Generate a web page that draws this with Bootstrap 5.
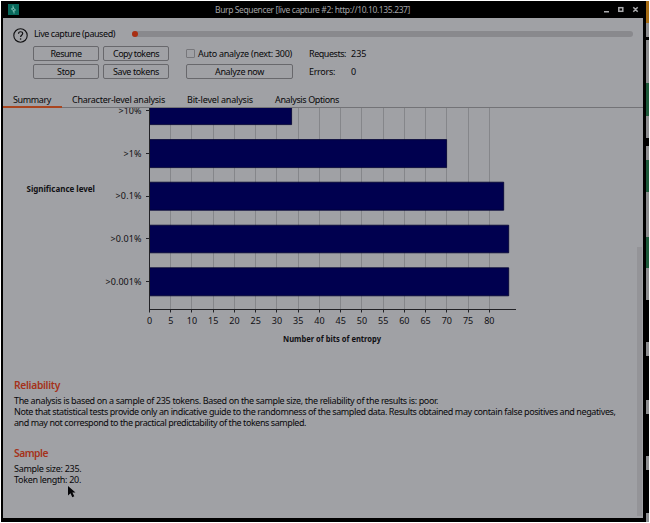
<!DOCTYPE html>
<html lang="en">
<head>
<meta charset="utf-8">
<title>Burp Sequencer</title>
<link href="https://cdn.jsdelivr.net/npm/bootstrap@5.3.0/dist/css/bootstrap.min.css" rel="stylesheet">
<style>
body{width:650px;height:523px;overflow:hidden;background:#fff;font:9px/11px "Noto Sans","Open Sans",sans-serif;color:#08080a}
.win{width:645px;height:521px;margin:1px 0 0 1px;background:#000;padding:0 3px 4px 2px}
.titlebar{height:17px;color:#a3a3a6;font-size:8.5px}
.titlebar .logo{margin-left:5px}
.titlebar .caption{white-space:nowrap;padding-left:196px}
.winctl{margin-right:2px}
.body-area{background:#a0a1a5;min-height:0}
.tools{height:73px;padding:9px 9px 0 10px}
.help{width:15px;height:15px;margin:1px 0 0 0}
.top-rows{margin-left:-1px}
.live{height:14px;line-height:14px;padding-left:7px}
#live{width:97px}
.track{height:6px;border-radius:3px;background:#89898d;width:501px;margin-left:1px}
.knob{width:6px;height:6px;border-radius:50%;background:#a92f13}
.btn.tool{--bs-btn-padding-x:0;--bs-btn-padding-y:0;--bs-btn-font-size:9px;--bs-btn-line-height:12px;--bs-btn-color:#08080a;--bs-btn-border-color:#68686c;--bs-btn-border-radius:2px;height:15px}
.w66{width:66px}.w107{width:107px}
.r1,.r2{padding-left:6px;height:15px}
.r1{margin-top:5px}.r2{margin-top:3px}
.r1 .btn+.btn,.r2 .btn+.btn{margin-left:4px}
.r2 .btn+.w107{margin-left:17px}
.check{width:9px;height:9px;border:1px solid #77777b;border-radius:1px;margin:0 3px 0 17px}
#auto{width:111px}.r2 .lab{margin-left:16px}
.lab{width:42px}
.tabs{height:17px;border-bottom:1px solid #737377;padding-left:10px}
.tabs .nav-link{padding:3px 0 0;color:#08080a;line-height:12px;height:17px;white-space:nowrap;font-size:9px}
.tabs .nav-link.active{border-bottom:2px solid #a9451f;margin-left:-10px;padding-left:10px;width:59px}
.tabs .t2{margin-left:10px;width:115px}.tabs .t3{width:88px}
.scroller{height:410px;overflow:hidden}
.chart{height:262px;width:634px}
.chart text{font-size:9px;fill:#101014}
.heading{font-size:10.3px;line-height:14px;font-weight:600;color:#a5321a}
.report{padding-left:11px;white-space:nowrap}
.rel{margin-top:8px}.sam{margin-top:18px}
.p1,.p2{margin-top:3px}
.thumb{width:5px;height:269px;margin-top:139px;background:#949498}
.desk{width:3px;height:521px;margin-top:1px;background:#000}
.g{background:#8d8e90}.gr{background:#1e5b3c}.or{background:#a76d14}
.pointer{left:67px;top:485px}
</style>
</head>
<body class="d-flex position-relative">
<main class="win d-flex flex-column flex-shrink-0">
  <header class="titlebar d-flex align-items-center">
    <svg class="logo" width="11" height="11" viewBox="0 0 11 11"><rect width="11" height="11" fill="#08695c"/><path d="M5 1.5v3.4H3.3L6 7.2H4.8M6 9.5V6h1.6L5 3.8h1" fill="none" stroke="#79bfb2" stroke-width="1"/></svg>
    <div class="caption flex-grow-1"><span id="cap">Burp Sequencer [live capture #2: http://10.10.135.237]</span></div>
    <svg class="winctl" width="38" height="11" viewBox="0 0 38 11" fill="none" stroke="#aaaaad" stroke-width="1.5"><path d="M1 7.8h5M30.3 3.2l4.4 4.6M34.7 3.2l-4.400 4.6"/><rect x="15.8" y="3.7" width="4" height="3.6"/></svg>
  </header>
  <div class="body-area flex-grow-1 d-flex flex-column">
    <section class="tools d-flex">
      <svg class="help flex-shrink-0" viewBox="0 0 15 15"><circle cx="7.5" cy="7.5" r="6.7" fill="none" stroke="#101012" stroke-width="1.1"/><path d="M5.5 5.8c0-2.8 4.2-2.6 4.2-.2 0 1.7-2.1 1.7-2.1 3.4" fill="none" stroke="#101012" stroke-width="1.2"/><circle cx="7.6" cy="11" r=".8" fill="#101012"/></svg>
      <div class="top-rows">
        <div class="live d-flex align-items-center"><span id="live">Live capture (paused)</span><div class="track"><div class="knob"></div></div></div>
        <div class="r1 d-flex align-items-center"><button class="btn tool w66"><span id="b1">Resume</span></button><button class="btn tool w66"><span id="b2">Copy tokens</span></button><span class="check"></span><span id="auto">Auto analyze (next: 300)</span><span class="lab" id="req">Requests:</span><span>235</span></div>
        <div class="r2 d-flex align-items-center"><button class="btn tool w66"><span id="b3">Stop</span></button><button class="btn tool w66"><span id="b4">Save tokens</span></button><button class="btn tool w107"><span id="b5">Analyze now</span></button><span class="lab" id="err">Errors:</span><span>0</span></div>
      </div>
    </section>
    <nav class="tabs nav flex-nowrap">
      <a class="nav-link active"><span id="t1">Summary</span></a><a class="nav-link t2"><span id="t2">Character-level analysis</span></a><a class="nav-link t3"><span id="t3">Bit-level analysis</span></a><a class="nav-link t4"><span id="t4">Analysis Options</span></a>
    </nav>
    <section class="scroller d-flex">
      <div class="flex-shrink-0">
        <svg class="chart d-block" viewBox="3 108 634 262">
          <path id="grid" stroke="#85868a" fill="none"/>
          <g fill="#00004f" stroke="#000030" stroke-width=".8"><path d="M149.5 104H291.6v20.6H149.5zM149.5 139.6H446.6v28H149.5zM149.5 182.2H503.7v28H149.5zM149.5 225.2H508.7v27.6H149.5zM149.5 267.8H508.7v28H149.5z"/></g>
          <path id="axis" d="M149.5 108V309.5H516M146 153.5h3M146 196.5h3M146 238.5h3M146 281.5h3M146 110.5h3" stroke="#222226" fill="none"/>
          <g text-anchor="end"><text x="141.5" y="113.5" textLength="23">&gt;10%</text><text x="141.5" y="156.5" textLength="18">&gt;1%</text><text x="141.5" y="199" textLength="26">&gt;0.1%</text><text x="141.5" y="241.7" textLength="31">&gt;0.01%</text><text x="141.5" y="284.5" textLength="36">&gt;0.001%</text></g>
          <g id="nums" text-anchor="middle"></g>
          <text x="26.5" y="191.5" font-weight="700" textLength="68.5" lengthAdjust="spacingAndGlyphs">Significance level</text>
          <text x="283" y="342" font-weight="700" textLength="98" lengthAdjust="spacingAndGlyphs">Number of bits of entropy</text>
        </svg>
        <div class="report">
          <h2 class="heading rel mb-0"><span id="h1">Reliability</span></h2>
          <p class="p1 mb-0"><span id="p1">The analysis is based on a sample of 235 tokens. Based on the sample size, the reliability of the results is: poor.</span><br><span id="p2">Note that statistical tests provide only an indicative guide to the randomness of the sampled data. Results obtained may contain false positives and negatives,</span><br><span id="p3">and may not correspond to the practical predictability of the tokens sampled.</span></p>
          <h2 class="heading sam mb-0"><span id="h2">Sample</span></h2>
          <p class="p2 mb-0"><span id="p4">Sample size: 235.</span><br><span id="p5">Token length: 20.</span></p>
        </div>
      </div>
      <div class="thumb flex-shrink-0"></div>
    </section>
  </div>
</main>
<aside class="desk d-flex flex-column flex-shrink-0" id="desk"></aside>
<svg class="pointer position-absolute" width="10" height="14" viewBox="0 0 10 14"><path d="M1 1v9.5l2.5-2.2 1.8 4 2-1-1.9-3.7H8.5z" fill="#050507"/></svg>
<script>
const grid=document.getElementById('grid'),nums=document.getElementById('nums'),axis=document.getElementById('axis');
let g='',a=axis.getAttribute('d'),n='';
for(let i=0;i<=16;i++){const x=149.5+i*21.24,r=Math.round(x-.5)+.5;if(i)g+=`M${r} 108V309`;a+=`M${r} 309v3.5`;n+=`<text x="${x}" y="324">${i*5}</text>`}
grid.setAttribute('d',g);axis.setAttribute('d',a);nums.innerHTML=n;
// strip of the desktop that shows beside the window: [colour class, height]
document.getElementById('desk').innerHTML=[['or',22],['g',14],['',3],['g',43],['gr',33],['g',22],['',8],['g',14],['gr',32],['g',45],['gr',31],['g',32],['',42],['g',14],['',44],['g',14],['',42],['g',14],['',43],['g',9]].map(([c,h])=>`<div class="flex-shrink-0 ${c}" style="height:${h}px"></div>`).join('');
// letter-space each label so it takes its design width
const widths={cap:195,live:81,b1:31,b2:46,b3:18,b4:46,b5:49,auto:94,req:37,err:26,t1:38,t2:93,t3:66,t4:64,h1:46,h2:34,p1:424,p2:601.5,p3:292,p4:67.5,p5:67};
for(const k in widths){const e=document.getElementById(k),r=document.createRange();r.selectNodeContents(e);const w=r.getBoundingClientRect().width;e.style.letterSpacing=(widths[k]-w)/e.textContent.length+'px'}
</script>
<script src="https://cdn.jsdelivr.net/npm/bootstrap@5.3.0/dist/js/bootstrap.bundle.min.js"></script>
</body>
</html>
